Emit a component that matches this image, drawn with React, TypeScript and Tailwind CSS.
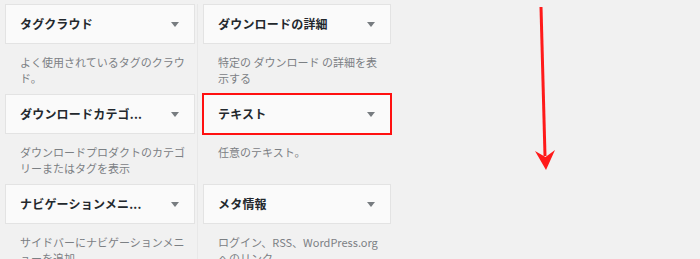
import React from "react";

type Widget = {
  title: string;
  desc: string[];
  active?: boolean;
};

const left: Widget[] = [
  { title: "タグクラウド", desc: ["よく使用されているタグのクラウ", "ド。"] },
  {
    title: "ダウンロードカテゴ...",
    desc: ["ダウンロードプロダクトのカテゴ", "リーまたはタグを表示"],
  },
  {
    title: "ナビゲーションメニ...",
    desc: ["サイドバーにナビゲーションメニ", "ューを追加。"],
  },
];

const right: Widget[] = [
  { title: "ダウンロードの詳細", desc: ["特定の ダウンロード の詳細を表", "示する"] },
  { title: "テキスト", desc: ["任意のテキスト。"], active: true },
  { title: "メタ情報", desc: ["ログイン、RSS、WordPress.org", "へのリンク。"] },
];

const WidgetCard: React.FC<{ w: Widget }> = ({ w }) => (
  <div className="h-[90px]">
    <div
      className={`h-[40px] flex items-center justify-between pl-[14px] pr-[15px] bg-[#fafafa] border border-[#e3e3e3] ${
        w.active ? "outline-2 outline-solid outline-[#ff1010] outline-offset-[-1px]" : ""
      }`}
    >
      <span className="text-[12px] font-bold text-[#23282d] tracking-[0.2px]">{w.title}</span>
      {/* dropdown caret */}
      <svg width="8" height="5" viewBox="0 0 8 5">
        <polygon points="0,0 8,0 4,5" fill="#777c80" />
      </svg>
    </div>
    <div className="pt-[10px] pl-[15px] text-[11px] leading-[16px] text-[#7c8084]">
      {w.desc.map((line, i) => (
        <div key={i} className="whitespace-nowrap">
          {line}
        </div>
      ))}
    </div>
  </div>
);

export default function App() {
  return (
    <div
      className="relative w-[700px] h-[259px] overflow-hidden bg-[#f1f1f1]"
      style={{ fontFamily: '"Noto Sans CJK JP", "Noto Sans", sans-serif' }}
    >
      <div className="flex pl-[5px] pt-[4px]">
        <div className="w-[190px] flex flex-col">
          {left.map((w) => (
            <WidgetCard key={w.title} w={w} />
          ))}
        </div>
        <div className="w-[8px] pl-[2px] flex">
          <div className="w-px bg-[#e8e8e8]" />
        </div>
        <div className="w-[188px] flex flex-col">
          {right.map((w) => (
            <WidgetCard key={w.title} w={w} />
          ))}
        </div>
      </div>

      {/* red annotation arrow */}
      <svg className="absolute left-0 top-0" width="700" height="259">
        <line x1="541" y1="7" x2="545" y2="156" stroke="#ff1a1a" strokeWidth="3" />
        <polygon points="535,151 545.5,157 555,150 546,170" fill="#ff1a1a" />
      </svg>
    </div>
  );
}
